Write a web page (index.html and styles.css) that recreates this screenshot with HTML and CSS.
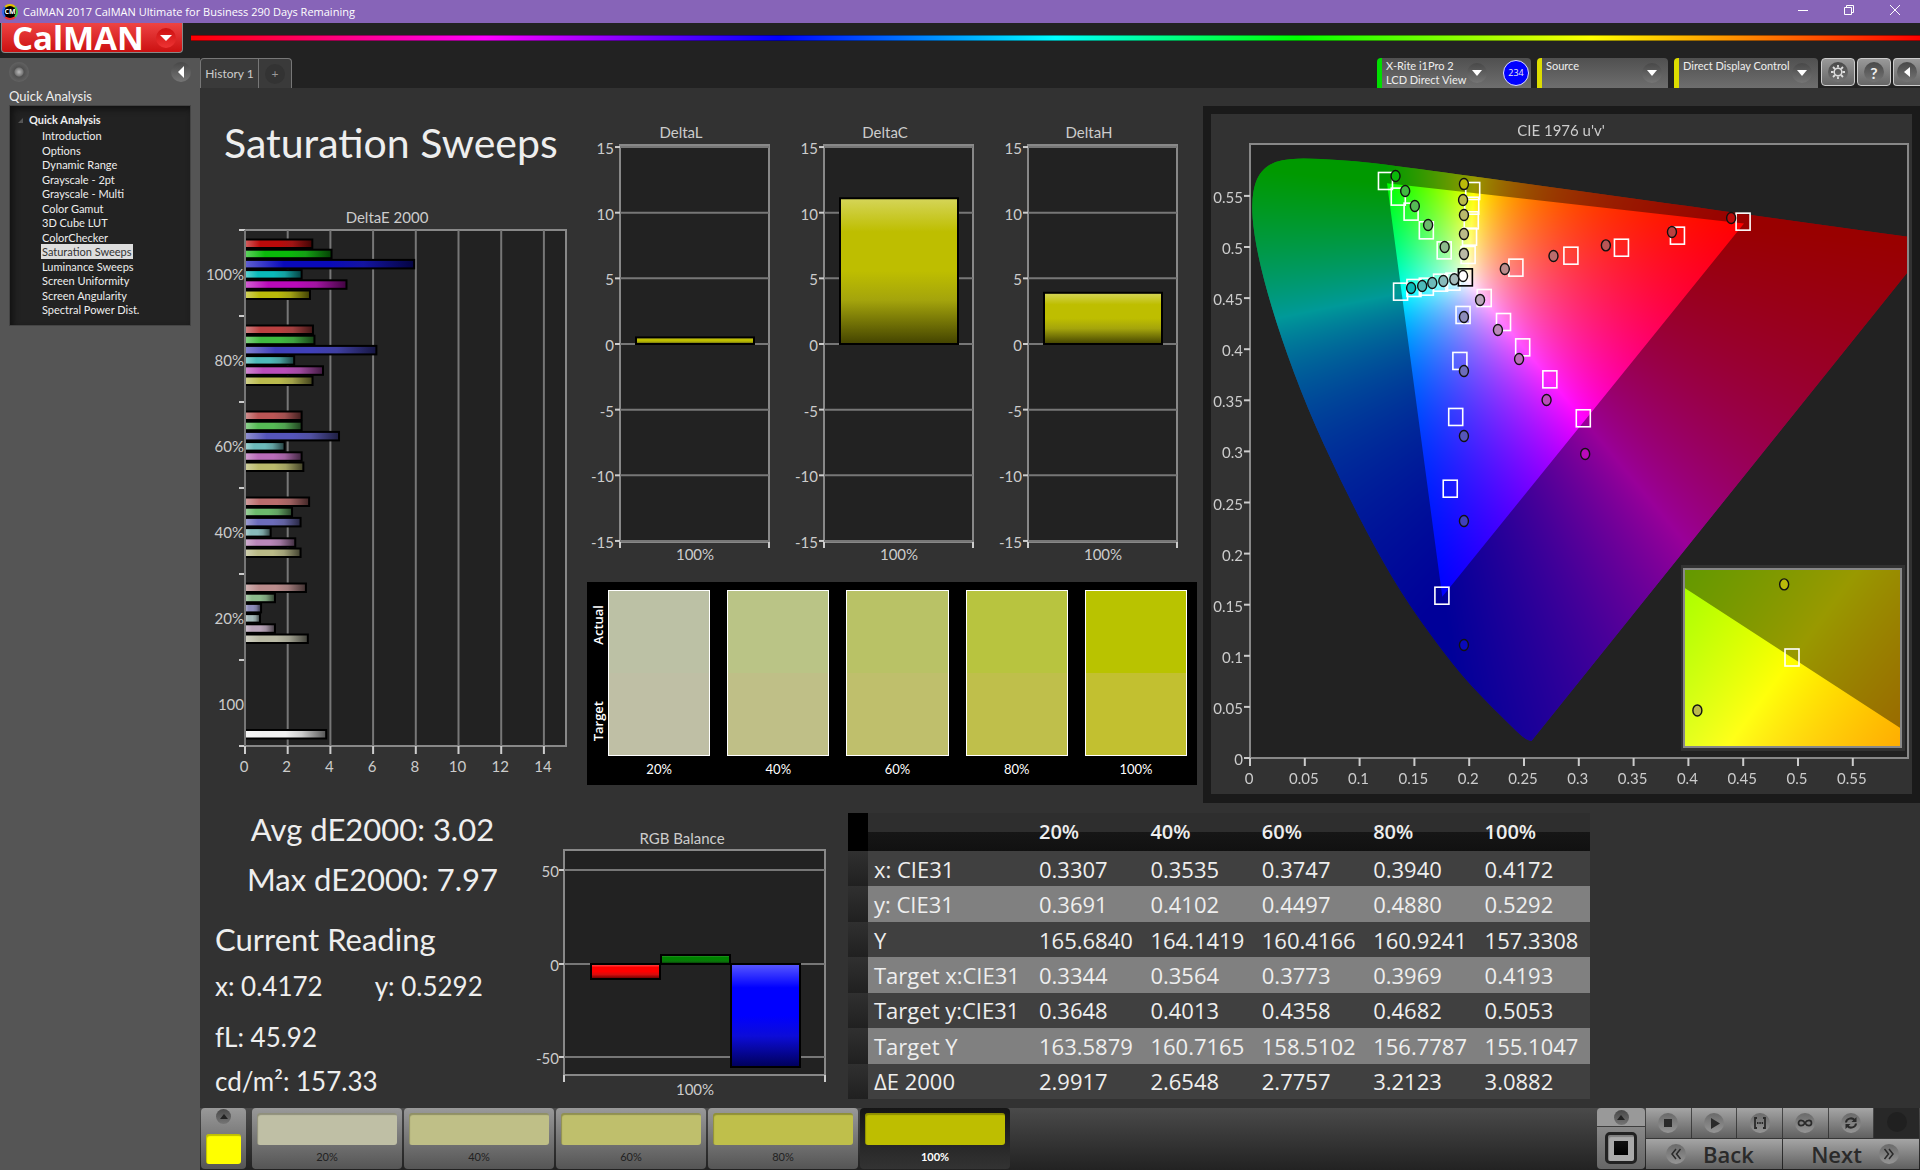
FILE: index.html
```html
<!DOCTYPE html>
<html lang="en">
<head>
  <meta charset="UTF-8">
  <meta name="viewport" content="width=device-width, initial-scale=1.0">
  <title>CalMAN 2017 CalMAN Ultimate for Business</title>
  <link rel="stylesheet" href="styles.css">
</head>
<body>
  <header class="titlebar">
    <span class="app-icon">CM</span>
    <span class="app-title">CalMAN 2017 CalMAN Ultimate for Business 290 Days Remaining</span>
    <div class="window-buttons">
      <button aria-label="Minimize"><svg width="12" height="12" viewBox="0 0 12 12"><path d="M1 6.5h10"/></svg></button>
      <button aria-label="Restore"><svg width="12" height="12" viewBox="0 0 12 12"><path d="M1.5 3.5h7v7h-7zM3.5 3.500v-2h7v7h-2"/></svg></button>
      <button aria-label="Close"><svg width="12" height="12" viewBox="0 0 12 12"><path d="M1 1l10 10M11 1L1 11"/></svg></button>
    </div>
  </header>

  <div class="brandbar">
    <button class="logo">CalMAN <span class="round red"><svg width="12" height="6" viewBox="0 0 12 6"><path d="M0 0h12L6 6z" fill="#fff"/></svg></span></button>
    <div class="rainbow"></div>
  </div>

  <div class="shell">
    <aside class="sidebar">
      <div class="sidebar-top">
        <span class="round dot"></span>
        <button class="round" aria-label="Collapse"><svg width="7" height="12" viewBox="0 0 7 12"><path d="M6 0v12L0 6z" fill="#fff"/></svg></button>
      </div>
      <h2>Quick Analysis</h2>
      <nav class="tree">
        <strong>Quick Analysis</strong>
        <ul>
          <li><a href="#">Introduction</a></li>
          <li><a href="#">Options</a></li>
          <li><a href="#">Dynamic Range</a></li>
          <li><a href="#">Grayscale - 2pt</a></li>
          <li><a href="#">Grayscale - Multi</a></li>
          <li><a href="#">Color Gamut</a></li>
          <li><a href="#">3D Cube LUT</a></li>
          <li><a href="#">ColorChecker</a></li>
          <li><a href="#" class="active">Saturation Sweeps</a></li>
          <li><a href="#">Luminance Sweeps</a></li>
          <li><a href="#">Screen Uniformity</a></li>
          <li><a href="#">Screen Angularity</a></li>
          <li><a href="#">Spectral Power Dist.</a></li>
        </ul>
      </nav>
    </aside>

    <div class="workspace">
      <div class="toolbar">
        <div class="tabs">
          <button class="tab">History 1</button>
          <button class="tab add" aria-label="Add history"><span class="round">+</span></button>
        </div>
        <div class="devices">
          <div class="device meter">
            <button class="device-name">X-Rite i1Pro 2<br>LCD Direct View</button>
            <span class="round arrow"><svg width="10" height="6" viewBox="0 0 10 6"><path d="M0 0h10L5 6z" fill="#fff"/></svg></span>
            <span class="count">234</span>
          </div>
          <div class="device source">
            <select aria-label="Source"><option>Source</option></select>
            <span class="round arrow"><svg width="10" height="6" viewBox="0 0 10 6"><path d="M0 0h10L5 6z" fill="#fff"/></svg></span>
          </div>
          <div class="device display">
            <select aria-label="Display"><option>Direct Display Control</option></select>
            <span class="round arrow"><svg width="10" height="6" viewBox="0 0 10 6"><path d="M0 0h10L5 6z" fill="#fff"/></svg></span>
          </div>
          <button class="tool" aria-label="Settings"><span class="round"><svg width="14" height="14" viewBox="0 0 14 14"><circle cx="7" cy="7" r="3.800" fill="none" stroke="#ddd" stroke-width="1.500"/><path d="M7 0v2.500M7 11.500V14M0 7h2.500M11.500 7H14M2 2l2 2M10 10l2 2M12 2l-2 2M4 10l-2 2" stroke="#ddd" stroke-width="1.800"/></svg></span></button>
          <button class="tool" aria-label="Help"><span class="round help">?</span></button>
          <button class="tool last" aria-label="Collapse"><span class="round"><svg width="6" height="10" viewBox="0 0 6 10"><path d="M6 0v10L0 5z" fill="#fff"/></svg></span></button>
        </div>
      </div>

      <main>
        <section class="top-row">
          <div class="sweep">
            <h1>Saturation Sweeps</h1>
            <svg id="delta-e" class="chart" viewBox="0 0 380 580"></svg>
          </div>

          <div class="middle">
            <div class="deltas">
              <svg class="chart delta" data-title="DeltaL" data-value="0.5" viewBox="0 0 204 450"></svg>
              <svg class="chart delta" data-title="DeltaC" data-value="11.1" viewBox="0 0 204 450"></svg>
              <svg class="chart delta" data-title="DeltaH" data-value="3.9" viewBox="0 0 204 450"></svg>
            </div>
            <div class="compare">
              <div class="compare-labels"><span>Actual</span><span>Target</span></div>
              <div class="patch"><div class="p20"></div><span>20%</span></div>
              <div class="patch"><div class="p40"></div><span>40%</span></div>
              <div class="patch"><div class="p60"></div><span>60%</span></div>
              <div class="patch"><div class="p80"></div><span>80%</span></div>
              <div class="patch"><div class="p100"></div><span>100%</span></div>
            </div>
          </div>

          <div class="cie">
            <canvas id="gamut" width="701" height="680"></canvas>
            <svg id="cie-axes" class="chart" viewBox="0 0 701 680"></svg>
          </div>
        </section>

        <section class="bottom-row">
          <div class="stats">
            <p class="big center">Avg dE2000: 3.02</p>
            <p class="big center">Max dE2000: 7.97</p>
            <p class="big reading">Current Reading</p>
            <p class="xy"><span>x: 0.4172</span><span>y: 0.5292</span></p>
            <p>fL: 45.92</p>
            <p>cd/m²: 157.33</p>
          </div>
          <svg id="rgb" class="chart" viewBox="0 0 310 305"></svg>
          <table>
            <colgroup><col class="handle"><col class="name"><col><col><col><col><col></colgroup>
            <thead>
              <tr><td></td><td></td><th>20%</th><th>40%</th><th>60%</th><th>80%</th><th>100%</th></tr>
            </thead>
            <tbody>
              <tr><td></td><td>x: CIE31</td><td>0.3307</td><td>0.3535</td><td>0.3747</td><td>0.3940</td><td>0.4172</td></tr>
              <tr><td></td><td>y: CIE31</td><td>0.3691</td><td>0.4102</td><td>0.4497</td><td>0.4880</td><td>0.5292</td></tr>
              <tr><td></td><td>Y</td><td>165.6840</td><td>164.1419</td><td>160.4166</td><td>160.9241</td><td>157.3308</td></tr>
              <tr><td></td><td>Target x:CIE31</td><td>0.3344</td><td>0.3564</td><td>0.3773</td><td>0.3969</td><td>0.4193</td></tr>
              <tr><td></td><td>Target y:CIE31</td><td>0.3648</td><td>0.4013</td><td>0.4358</td><td>0.4682</td><td>0.5053</td></tr>
              <tr><td></td><td>Target Y</td><td>163.5879</td><td>160.7165</td><td>158.5102</td><td>156.7787</td><td>155.1047</td></tr>
              <tr><td></td><td>ΔE 2000</td><td>2.9917</td><td>2.6548</td><td>2.7757</td><td>3.2123</td><td>3.0882</td></tr>
            </tbody>
          </table>
        </section>
      </main>

      <footer>
        <button class="current" aria-label="Current color"><span class="round small"><svg width="8" height="5" viewBox="0 0 8 5"><path d="M0 5h8L4 0z" fill="#222"/></svg></span><i></i></button>
        <div class="levels">
          <button><i class="l20"></i>20%</button>
          <button><i class="l40"></i>40%</button>
          <button><i class="l60"></i>60%</button>
          <button><i class="l80"></i>80%</button>
          <button class="selected"><i class="l100"></i>100%</button>
        </div>
        <div class="controls">
          <div class="pattern">
            <button aria-label="Expand"><span class="round small"><svg width="8" height="5" viewBox="0 0 8 5"><path d="M0 5h8L4 0z" fill="#222"/></svg></span></button>
            <button class="window" aria-label="Pattern window"><i></i></button>
          </div>
          <div class="transport">
            <div class="play-row">
              <button aria-label="Stop"><span class="round"><svg width="16" height="16" viewBox="0 0 16 16"><path d="M4 4h8v8H4z" fill="#2a2a2a"/></svg></span></button>
              <button aria-label="Play"><span class="round"><svg width="16" height="16" viewBox="0 0 16 16"><path d="M5 3v11l9-5.500z" fill="#2a2a2a"/></svg></span></button>
              <button aria-label="Read series"><span class="round"><svg width="16" height="16" viewBox="0 0 16 16"><path d="M5 3H3v10h2M11 3h2v10h-2" fill="none" stroke="#2a2a2a" stroke-width="1.800"/><path d="M5 7h1.500v2H5zM7.300 7h1.500v2H7.300zM9.600 7h1.500v2H9.600z" fill="#2a2a2a"/></svg></span></button>
              <button aria-label="Continuous"><span class="round"><svg width="16" height="16" viewBox="0 0 16 16"><path d="M8 8C6 4.500 1.500 4.500 1.500 8S6 11.500 8 8s6.500-3.500 6.500 0S10 11.500 8 8z" fill="none" stroke="#2a2a2a" stroke-width="1.700"/></svg></span></button>
              <button aria-label="Repeat"><span class="round"><svg width="16" height="16" viewBox="0 0 16 16"><path d="M3 7.500C3.300 3.500 9 2 11.500 5M13 8.500C12.700 12.500 7 14 4.500 11" fill="none" stroke="#2a2a2a" stroke-width="2"/><path d="M13.500 2v5h-5zM2.500 14V9h5z" fill="#2a2a2a"/></svg></span></button>
              <button class="off" aria-label="Record"><span class="round"></span></button>
            </div>
            <div class="nav-row">
              <button class="back"><span class="round"><svg width="12" height="12" viewBox="0 0 12 12"><path d="M6 1L2 6l4 5M10.500 1l-4 5 4 5" fill="none" stroke="#2a2a2a" stroke-width="1.500"/></svg></span>Back</button>
              <button class="next">Next<span class="round"><svg width="12" height="12" viewBox="0 0 12 12"><path d="M1.500 1l4 5-4 5M6 1l4 5-4 5" fill="none" stroke="#2a2a2a" stroke-width="1.500"/></svg></span></button>
            </div>
          </div>
        </div>
      </footer>
    </div>
  </div>

  <script src="charts.js"></script>
</body>
</html>
```
FILE: styles.css
```css
* {
  box-sizing: border-box;
}
body {
  margin: 0;
  min-height: 100vh;
  display: flex;
  flex-direction: column;
  background: #222;
  color: #eee;
  font-family: Lato, sans-serif;
  font-size: 11px;
  overflow-x: hidden;
}
button, select {
  font: inherit;
  color: inherit;
  background: none;
  border: none;
  padding: 0;
  margin: 0;
}
h1, h2, p, ul {
  margin: 0;
  padding: 0;
  font-weight: normal;
}
.round {
  display: inline-flex;
  align-items: center;
  justify-content: center;
  width: 20px;
  height: 20px;
  border-radius: 50%;
  background: linear-gradient(#484848, #757575);
}

/* window title and brand */
.titlebar {
  display: flex;
  align-items: center;
  height: 23px;
  background: #8764b8;
  color: #fff;
  font-family: "Open Sans", sans-serif;
  font-size: 11px;
}
.app-icon {
  width: 16px;
  height: 16px;
  margin: 0 5px 0 2px;
  border: 2px solid;
  border-color: #e6c300 #4c4 #e33 #36e;
  border-radius: 50%;
  background: #000;
  font-size: 7px;
  font-weight: bold;
  line-height: 12px;
  text-align: center;
}
.window-buttons {
  display: flex;
  margin-left: auto;
  padding-right: 2px;
}
.window-buttons button {
  width: 46px;
  height: 23px;
}
.window-buttons path {
  fill: none;
  stroke: #fff;
}
.brandbar {
  display: flex;
  height: 35px;
}
.logo {
  display: flex;
  align-items: center;
  justify-content: space-between;
  width: 182px;
  height: 30px;
  margin: 0 8px 0 1px;
  padding: 0 6px 0 10px;
  border: 1px solid #888;
  border-top: none;
  border-radius: 0 0 4px 4px;
  background: linear-gradient(#e44, #c11);
  color: #fff;
  font-family: "Open Sans", sans-serif;
  font-size: 33px;
  font-weight: bold;
  line-height: 26px;
}
.round.red {
  background: linear-gradient(#c11, #e33);
}
.rainbow {
  flex: 1;
  height: 6px;
  margin-top: 12px;
  border: solid rgba(0, 0, 0, 0.4);
  border-width: 1px 0;
  background: linear-gradient(90deg, #f00, #f0f 17%, #00f 34%, #0ff 50%, #0f0 64%, #ff0 81%, #f00);
}

/* sidebar */
.shell {
  flex: 1;
  display: flex;
}
.sidebar {
  width: 200px;
  background: #555;
  padding: 4px 9px;
}
.sidebar-top {
  display: flex;
  justify-content: space-between;
}
.round.dot {
  background: radial-gradient(circle at 50% 50%, #bbb 0, #777 4px, #505050 5px, #626262 10px);
}
.sidebar h2 {
  margin-top: 6px;
  font-size: 13px;
  line-height: 16px;
}
.tree {
  margin-top: 1px;
  padding: 7px 0 8px 19px;
  border: 1px solid #444;
  background: #222;
  box-shadow: inset 3px 3px 6px #111;
}
.tree strong {
  display: block;
  position: relative;
  line-height: 14px;
}
.tree strong::before {
  content: "";
  position: absolute;
  left: -11px;
  top: 5px;
  border: solid transparent;
  border-width: 0 0 5px 5px;
  border-bottom-color: #555;
}
.tree ul {
  display: flex;
  flex-direction: column;
  height: 190px;
  padding-top: 1px;
  list-style: none;
}
.tree li {
  flex: 1;
  min-height: 0;
  padding-left: 12px;
  line-height: 15px;
}
.tree a {
  display: inline-block;
  padding: 0 1px;
  color: inherit;
  text-decoration: none;
}
.tree .active {
  background: #ddd;
  color: #333;
}

/* tabs and devices */
.workspace {
  flex: 1;
  min-width: 0;
  display: flex;
  flex-direction: column;
  background: #323232;
}
.toolbar {
  display: flex;
  justify-content: space-between;
  height: 30px;
  background: #222;
}
.tabs {
  display: flex;
  border: 1px solid #777;
  border-bottom: none;
  border-radius: 4px 4px 0 0;
  background: #3a3a3a;
  color: #ccc;
}
.tab {
  width: 57px;
  font-size: 12px;
}
.tab.add {
  width: 33px;
  border-left: 1px solid #777;
}
.tab .round {
  background: #333;
  color: #999;
}
.devices {
  display: flex;
  overflow: hidden;
}
.device {
  display: flex;
  align-items: center;
  margin-right: 6px;
  padding-right: 4px;
  border-left: 5px solid #dd0;
  border-radius: 4px 4px 0 0;
  background: linear-gradient(#505050, #6e6e6e);
  line-height: 14px;
}
.device.meter {
  width: 154px;
  border-left-color: #0d0;
}
.device.source {
  width: 131px;
}
.device.display {
  width: 144px;
  margin-right: 3px;
}
.device-name {
  flex: 1;
  padding-left: 4px;
  text-align: left;
}
.device select {
  flex: 1;
  min-width: 0;
  height: 30px;
  padding: 0 0 14px 4px;
  appearance: none;
}
.device .arrow {
  margin-right: 2px;
}
.count {
  width: 26px;
  height: 26px;
  margin: 0 -2px 0 14px;
  border: 1px solid #ddf;
  border-radius: 50%;
  background: #00f;
  font-family: "Open Sans", sans-serif;
  font-size: 9px;
  line-height: 24px;
  text-align: center;
}
.tool {
  width: 34px;
  height: 28px;
  margin-right: 2px;
  border: 1px solid #ccc;
  border-radius: 4px;
  background: linear-gradient(#999, #666);
}
.tool.last {
  width: 27px;
  margin-right: 0;
  border-right: none;
  border-radius: 4px 0 0 4px;
}
.round.help {
  font-size: 16px;
  font-weight: bold;
}

/* charts */
.top-row {
  display: grid;
  grid-template-columns: 380fr 623fr 717fr;
  align-items: start;
}
.chart {
  display: block;
  width: 100%;
}
.chart text {
  fill: #ccc;
  font-size: 15px;
}
.chart .plot {
  fill: #222;
  stroke: #888;
  stroke-width: 2;
}
.chart .grid {
  stroke: #777;
  stroke-width: 2;
}
.chart .tick {
  stroke: #ccc;
  stroke-width: 2;
}
.sweep h1 {
  margin: 25px 0 32px 24px;
  font-size: 41px;
  line-height: 60px;
}
.deltas {
  display: flex;
  padding: 30px 11px 0 0;
}
.delta {
  flex: 1;
  min-width: 0;
}
.compare {
  display: flex;
  gap: 17px;
  margin: 14px 6px 0 7px;
  padding: 8px 10px 8px 4px;
  background: #000;
  color: #fff;
}
.compare-labels {
  display: flex;
  flex-direction: column;
  justify-content: space-between;
  width: 17px;
  height: 166px;
  margin-right: -17px;
  padding: 15px 0;
  font-family: "Open Sans", sans-serif;
  font-size: 13px;
  font-weight: 600;
  line-height: 15px;
}
.compare-labels span {
  writing-mode: vertical-rl;
  transform: rotate(180deg);
}
.patch {
  flex: 1;
  text-align: center;
  font-size: 13px;
}
.patch div {
  height: 166px;
  border: 1px solid #fff;
}
.patch span {
  display: block;
  padding-top: 5px;
  line-height: 16px;
}
.p20 { background: linear-gradient(#bcc1a5 50%, #bfbfa5 50%); }
.p40 { background: linear-gradient(#bac486 50%, #bfbf87 50%); }
.p60 { background: linear-gradient(#b9c266 50%, #bfbf6c 50%); }
.p80 { background: linear-gradient(#b8c43f 50%, #bfbf4b 50%); }
.p100 { background: linear-gradient(#b9c300 50%, #c2c030 50%); }
.cie {
  position: relative;
  margin-top: 18px;
  border: 8px solid #1a1a1a;
  border-bottom-width: 9px;
}
.cie canvas {
  display: block;
  width: 100%;
}
.cie svg {
  position: absolute;
  inset: 0;
}
.cie .frame {
  fill: none;
  stroke: #888;
  stroke-width: 2;
}

/* readings */
.bottom-row {
  display: grid;
  grid-template-columns: 330fr 310fr 1080fr;
  align-items: start;
}
.stats {
  padding: 1px 0 0 15px;
  font-size: 26px;
  line-height: 44px;
}
.stats .big {
  font-size: 31px;
  line-height: 50px;
}
.stats .center {
  text-align: center;
}
.stats .reading {
  margin-top: 10px;
}
.stats .xy {
  display: flex;
  gap: 52px;
  margin-bottom: 7px;
}
table {
  width: 68.7%;
  height: 286px;
  margin: 10px 0 0 8px;
  border-collapse: collapse;
  table-layout: fixed;
  font-family: "Open Sans", sans-serif;
  font-size: 22px;
  line-height: 32px;
  white-space: nowrap;
}
col.handle {
  width: 20px;
}
col.name {
  width: 165px;
}
td, th {
  padding: 0 0 0 6px;
  text-align: left;
}
th {
  font-size: 20px;
  font-weight: 600;
}
thead tr {
  height: 38px;
}
thead td, thead th {
  background: linear-gradient(#2e2e2e 50%, #161616 50%, #111);
}
thead td:first-child {
  background: #000;
}
tbody tr {
  background: #404040;
}
tbody tr:nth-child(even) {
  background: #808080;
}
tbody td:first-child {
  background: linear-gradient(#303030, #202020);
}

/* bottom bar */
footer {
  display: flex;
  height: 62px;
  margin-top: auto;
  padding: 0 1px;
  background: linear-gradient(#4a4a4a, #222);
}
footer i {
  display: block;
  border-radius: 3px;
  box-shadow: inset 1px 2px 1px rgba(0, 0, 0, 0.25);
}
footer button {
  border-radius: 4px;
  background: linear-gradient(#999, #555);
}
.round.small {
  width: 15px;
  height: 15px;
}
.current {
  display: flex;
  flex-direction: column;
  align-items: center;
  justify-content: space-between;
  width: 45px;
  height: 61px;
  padding: 1px 0 5px;
}
.current i {
  width: 35px;
  height: 30px;
  background: #ff0;
}
.levels {
  display: flex;
  gap: 2px;
  margin-left: 6px;
}
.levels button {
  display: flex;
  flex-direction: column;
  align-items: center;
  width: 150px;
  height: 61px;
  padding: 5px 5px 0;
  color: #222;
  line-height: 24px;
}
.levels i {
  width: 140px;
  height: 37px;
}
.levels .selected {
  background: linear-gradient(#151515, #333);
  color: #fff;
  font-weight: bold;
}
.l20 { background: #bfbfa5; }
.l40 { background: #bfbf87; }
.l60 { background: #bfbf6c; }
.l80 { background: #bfbf4b; }
.l100 { background: #bebe00; }
.controls {
  display: flex;
  gap: 1px;
  margin-left: auto;
}
.pattern {
  display: flex;
  flex-direction: column;
  gap: 1px;
  width: 48px;
}
.pattern button {
  height: 18px;
  border-radius: 4px 4px 0 0;
  background: #999;
}
.pattern .window {
  display: flex;
  align-items: center;
  justify-content: center;
  height: 42px;
  border-radius: 0 0 4px 4px;
  background: linear-gradient(#888, #666);
}
.window i {
  width: 32px;
  height: 32px;
  border: 3px solid #222;
  border-radius: 5px;
  background: linear-gradient(#111, #000) center / 14px 14px no-repeat, #aaa;
}
.transport {
  width: 273px;
}
.play-row, .nav-row {
  display: flex;
  gap: 1px;
}
.transport button {
  flex: 1;
  height: 30px;
  border-radius: 0;
  background: linear-gradient(#a5a5a5, #606060);
}
.transport .round {
  background: linear-gradient(#6a6a6a, #959595);
}
.transport .off {
  background: #282828;
}
.transport .off .round {
  background: #202020;
}
.nav-row {
  margin-top: 1px;
}
.nav-row button {
  display: flex;
  align-items: center;
  justify-content: center;
  gap: 17px;
  color: #2a2a2a;
  font-family: "Open Sans", sans-serif;
  font-size: 22px;
  font-weight: 600;
}
.nav-row .back {
  padding-right: 8px;
}
.nav-row .next {
  padding-left: 8px;
}
```
FILE: charts.js
```js
const line = (x1, y1, x2, y2, cls) => `<line x1="${x1}" y1="${y1}" x2="${x2}" y2="${y2}" class="${cls}"/>`;
const text = (x, y, s, anchor = "middle") => `<text x="${x}" y="${y}" text-anchor="${anchor}">${s}</text>`;
const rect = (x, y, w, h, attrs) => `<rect x="${x}" y="${y}" width="${w}" height="${h}" ${attrs}/>`;
const rgb = c => `rgb(${c.join(",")})`;
const mix = (c, to, k) => c.map((v, i) => Math.round(v + (to[i] - v) * k));

let gradients = 0;
function shaded(x, y, w, h, color, vertical) {
  const id = "g" + gradients++;
  const dir = vertical ? 'x2="0" y2="1"' : "";
  return `<linearGradient id="${id}" ${dir}>
    <stop offset="0" stop-color="${rgb(mix(color, [255, 255, 255], 0.35))}"/>
    <stop offset="0.23" stop-color="${rgb(color)}"/>
    <stop offset="0.5" stop-color="${rgb(color)}"/>
    <stop offset="0.7" stop-color="${rgb(mix(color, [60, 60, 60], 0.2))}"/>
    <stop offset="1" stop-color="${rgb(mix(color, [0, 0, 0], 0.65))}"/>
  </linearGradient>` + rect(x, y, w, h, `fill="url(#${id})" stroke="#000" stroke-width="2"`);
}

// off-channel level of each hue at 100, 80, 60, 40 and 20 % saturation
const primaryLevels = [10, 64, 85, 108, 140];
const mixedLevels = [10, 77, 108, 135, 165];
const hues = {
  red: [1, 0, 0], green: [0, 1, 0], blue: [0, 0, 1],
  cyan: [0, 1, 1], magenta: [1, 0, 1], yellow: [1, 1, 0]
};
function hueColor(hue, i) {
  const on = hues[hue];
  const off = on.filter(Boolean).length === 1 ? primaryLevels : mixedLevels;
  return on.map(v => v ? 186 : off[i]);
}

function drawDeltaE() {
  const data = [
    [3.2, 4.1, 7.97, 2.7, 4.8, 3.09],
    [3.23, 3.3, 6.2, 2.35, 3.7, 3.21],
    [2.7, 2.7, 4.45, 1.9, 2.7, 2.78],
    [3.05, 2.25, 2.65, 1.25, 2.4, 2.65],
    [2.9, 1.45, 0.8, 0.75, 1.45, 2.99]
  ];
  const names = ["100%", "80%", "60%", "40%", "20%", "100"];
  const unit = 21.35;
  let out = text(187, 18, "DeltaE 2000") + rect(45, 25, 321, 516, 'class="plot"');
  for (let v = 0; v <= 14; v += 2) {
    const x = 45 + v * unit;
    if (v) out += line(x, 25, x, 541, "grid");
    out += line(x, 541, x, 549, "tick") + text(x - 1, 567, v);
  }
  for (let i = 0; i <= 6; i++) out += line(39, 25 + i * 86, 45, 25 + i * 86, "tick");
  names.forEach((n, i) => out += text(44, 75 + i * 86, n, "end"));
  data.forEach((group, g) => group.forEach((v, i) => {
    out += shaded(45, 34.5 + g * 86 + i * 10.2, v * unit - 1, 8.5, hueColor(Object.keys(hues)[i], g));
  }));
  out += shaded(45, 525, 3.85 * unit - 1, 8.5, [240, 240, 240]);
  out += line(45, 25, 45, 541, "grid");
  document.getElementById("delta-e").innerHTML = out;
}

function drawDelta(svg) {
  const v = +svg.dataset.value;
  const y = n => 226 - n * 13.13;
  let out = text(101, 20, svg.dataset.title) + rect(40, 27, 149, 397, 'class="plot"');
  for (let n = -15; n <= 15; n += 5) {
    out += line(40, y(n), 189, y(n), "grid") + line(35, y(n), 40, y(n), "tick") + text(34, y(n) + 7, n, "end");
  }
  out += line(40, 424, 40, 430, "tick") + line(189, 424, 189, 430, "tick") + text(115, 442, "100%");
  out += shaded(56, y(v), 118, v * 13.13, [190, 190, 0], true);
  svg.innerHTML = out;
}

function drawRgb() {
  let out = text(152, 41, "RGB Balance") + rect(34, 47, 261, 225, 'class="plot"');
  [[50, 67], [0, 161], [-50, 254]].forEach(([n, y]) => {
    out += line(34, y, 295, y, "grid") + line(29, y, 34, y, "tick") + text(29, y + 7, n, "end");
  });
  out += line(34, 272, 34, 279, "tick") + line(295, 272, 295, 279, "tick") + text(165, 292, "100%");
  out += shaded(61, 161, 69, 15, [255, 0, 0], true);
  out += shaded(131, 152, 69, 9, [0, 130, 0], true);
  out += shaded(201, 161, 69, 103, [0, 0, 255], true);
  document.getElementById("rgb").innerHTML = out;
}

// CIE 1931 spectral locus
const locus = [
  [.1741, .005], [.1714, .0051], [.1644, .0109], [.1566, .0177], [.144, .0297], [.1241, .0578],
  [.1096, .0868], [.0913, .1327], [.0687, .2007], [.0454, .295], [.0235, .4127], [.0082, .5384],
  [.0039, .6548], [.0139, .7502], [.0389, .812], [.0743, .8338], [.1142, .8262], [.1547, .8059],
  [.2296, .7543], [.3016, .6923], [.3731, .6245], [.4441, .5547], [.5125, .4866], [.5752, .4242],
  [.627, .3725], [.6915, .3083], [.7347, .2653]
];
const primaries = [[.64, .33], [.3, .6], [.15, .06]];

const plotX = u => 39 + u * 1096;
const plotY = v => 644 - v * 1022;
const toUv = ([x, y]) => [4 * x / (-2 * x + 12 * y + 3), 9 * y / (-2 * x + 12 * y + 3)];
const uvPoint = xy => { const [u, v] = toUv(xy); return [plotX(u), plotY(v)]; };
const insetPoint = ([x, y]) => [581 + (x - .4193) * 3740, 543.5 - (y - .5053) * 3060];

function xyToRgb(x, y) {
  const X = x / y, Z = (1 - x - y) / y;
  const c = [
    3.2406 * X - 1.5372 - 0.4986 * Z,
    -0.9689 * X + 1.8758 + 0.0415 * Z,
    0.0557 * X - 0.204 + 1.057 * Z
  ].map(v => Math.max(0, v));
  const top = Math.max(...c);
  return c.map(v => v / top * 255);
}

function paint(ctx, x0, y0, w, h, toXy, toPoint) {
  const layer = document.createElement("canvas");
  layer.width = w;
  layer.height = h;
  const lctx = layer.getContext("2d");
  const img = lctx.createImageData(w, h);
  for (let j = 0; j < h; j++) {
    for (let i = 0; i < w; i++) {
      const [x, y] = toXy(x0 + i, y0 + j);
      const c = y > 0 ? xyToRgb(x, y) : [0, 0, 255];
      img.data.set([c[0], c[1], c[2], 255], (j * w + i) * 4);
    }
  }
  lctx.putImageData(img, 0, 0);

  const shape = (path, points) => {
    points.forEach((p, i) => path[i ? "lineTo" : "moveTo"](...toPoint(p)));
    path.closePath();
  };
  ctx.save();
  ctx.beginPath();
  ctx.rect(x0, y0, w, h);
  ctx.clip();
  const edge = new Path2D();
  if (toPoint === uvPoint) smoothLocus(edge);
  else edge.rect(x0, y0, w, h);
  ctx.clip(edge);
  ctx.drawImage(layer, x0, y0);
  const outside = new Path2D();
  outside.rect(x0, y0, w, h);
  shape(outside, primaries);
  ctx.fillStyle = "rgba(0,0,0,0.4)";
  ctx.fill(outside, "evenodd");
  ctx.restore();
}

function smoothLocus(path) {
  const p = locus.map(uvPoint);
  path.moveTo(...p[0]);
  for (let i = 1; i < p.length - 1; i++) {
    path.quadraticCurveTo(...p[i], (p[i][0] + p[i + 1][0]) / 2, (p[i][1] + p[i + 1][1]) / 2);
  }
  path.lineTo(...p[p.length - 1]);
  path.closePath();
}

function drawGamut() {
  const ctx = document.getElementById("gamut").getContext("2d");
  ctx.fillStyle = "#323232";
  ctx.fillRect(0, 0, 701, 680);
  ctx.fillStyle = "#222";
  ctx.fillRect(39, 30, 658, 614);
  paint(ctx, 39, 30, 658, 614, (px, py) => {
    const u = (px - 39) / 1096, v = (644 - py) / 1022;
    const d = 6 * u - 16 * v + 12;
    return [9 * u / d, 4 * v / d];
  }, uvPoint);
  ctx.fillStyle = "#323232";
  ctx.fillRect(470, 451, 224, 186);
  paint(ctx, 473, 455, 217, 178, (px, py) => [.4193 + (px - 581) / 3740, .5053 - (py - 543.5) / 3060], insetPoint);
}

const targets = [
  [.1236, .5646], [.1353, .5493], [.147, .5346], [.1609, .5163], [.1772, .4967],
  [.2032, .5548], [.2023, .5404], [.2019, .5261], [.2003, .5101], [.199, .4922],
  [.4499, .5248], [.39, .5111], [.3389, .4993], [.2928, .4915], [.2426, .4798],
  [.1374, .4563], [.1496, .4599], [.1609, .4612], [.1739, .4651], [.1852, .4661],
  [.3041, .3324], [.2736, .3705], [.2488, .4018], [.2313, .4266], [.2137, .4501],
  [.1751, .1588], [.1827, .2635], [.1877, .3337], [.1915, .3885], [.1944, .4335]
];
// measured points, 100 % first
const readings = {
  green: [[.1328, .5695], [.1416, .5548], [.1504, .5401], [.1625, .5215], [.1776, .5]],
  yellow: [[.1952, .5616], [.1944, .546], [.1952, .5313], [.1952, .5127], [.1952, .4932]],
  red: [[.439, .5284], [.385, .5147], [.3247, .5016], [.2769, .4912], [.2325, .4785]],
  cyan: [[.147, .4599], [.1571, .4618], [.1663, .4648], [.1764, .4667], [.1864, .4684]],
  magenta: [[.3058, .2975], [.2706, .3503], [.2455, .3904], [.2262, .4188], [.2099, .4482]],
  blue: [[.1952, .1106], [.1952, .2319], [.1952, .3151], [.1952, .3787], [.1952, .4315]]
};

const square = (x, y, color) => rect(x - 7, y - 8.5, 14, 17, `fill="none" stroke="${color}" stroke-width="1.600"`);
const dot = (x, y, color) => `<ellipse cx="${x}" cy="${y}" rx="4.500" ry="5.500" fill="${color}" stroke="#111" stroke-width="1.400"/>`;

function drawCieAxes() {
  let out = text(350, 22, "CIE 1976 u'v'") + rect(39, 30, 658, 614, 'class="frame"');
  for (let i = 0; i <= 11; i++) {
    const n = +(i * 0.05).toFixed(2);
    const x = plotX(n), y = plotY(n);
    out += line(x, 644, x, 652, "tick") + text(x - 1, 670, n);
    out += line(33, y, 39, y, "tick") + text(32, y + 7, n, "end");
  }
  targets.forEach(([u, v]) => out += square(plotX(u), plotY(v), "#fff"));
  out += square(plotX(.1965), plotY(.4703), "#000");
  for (const hue in readings) {
    readings[hue].forEach(([u, v], i) => out += dot(plotX(u), plotY(v), rgb(hueColor(hue, i))));
  }
  out += dot(plotX(.1944), plotY(.4716), "#fff");
  out += rect(473, 455, 217, 178, 'class="frame"');
  out += square(...insetPoint([.4193, .5053]), "#fff");
  out += dot(...insetPoint([.4172, .5292]), rgb(hueColor("yellow", 0)));
  out += dot(...insetPoint([.394, .488]), rgb(hueColor("yellow", 1)));
  document.getElementById("cie-axes").innerHTML = out;
}

drawDeltaE();
document.querySelectorAll(".delta").forEach(drawDelta);
drawRgb();
drawGamut();
drawCieAxes();
```
